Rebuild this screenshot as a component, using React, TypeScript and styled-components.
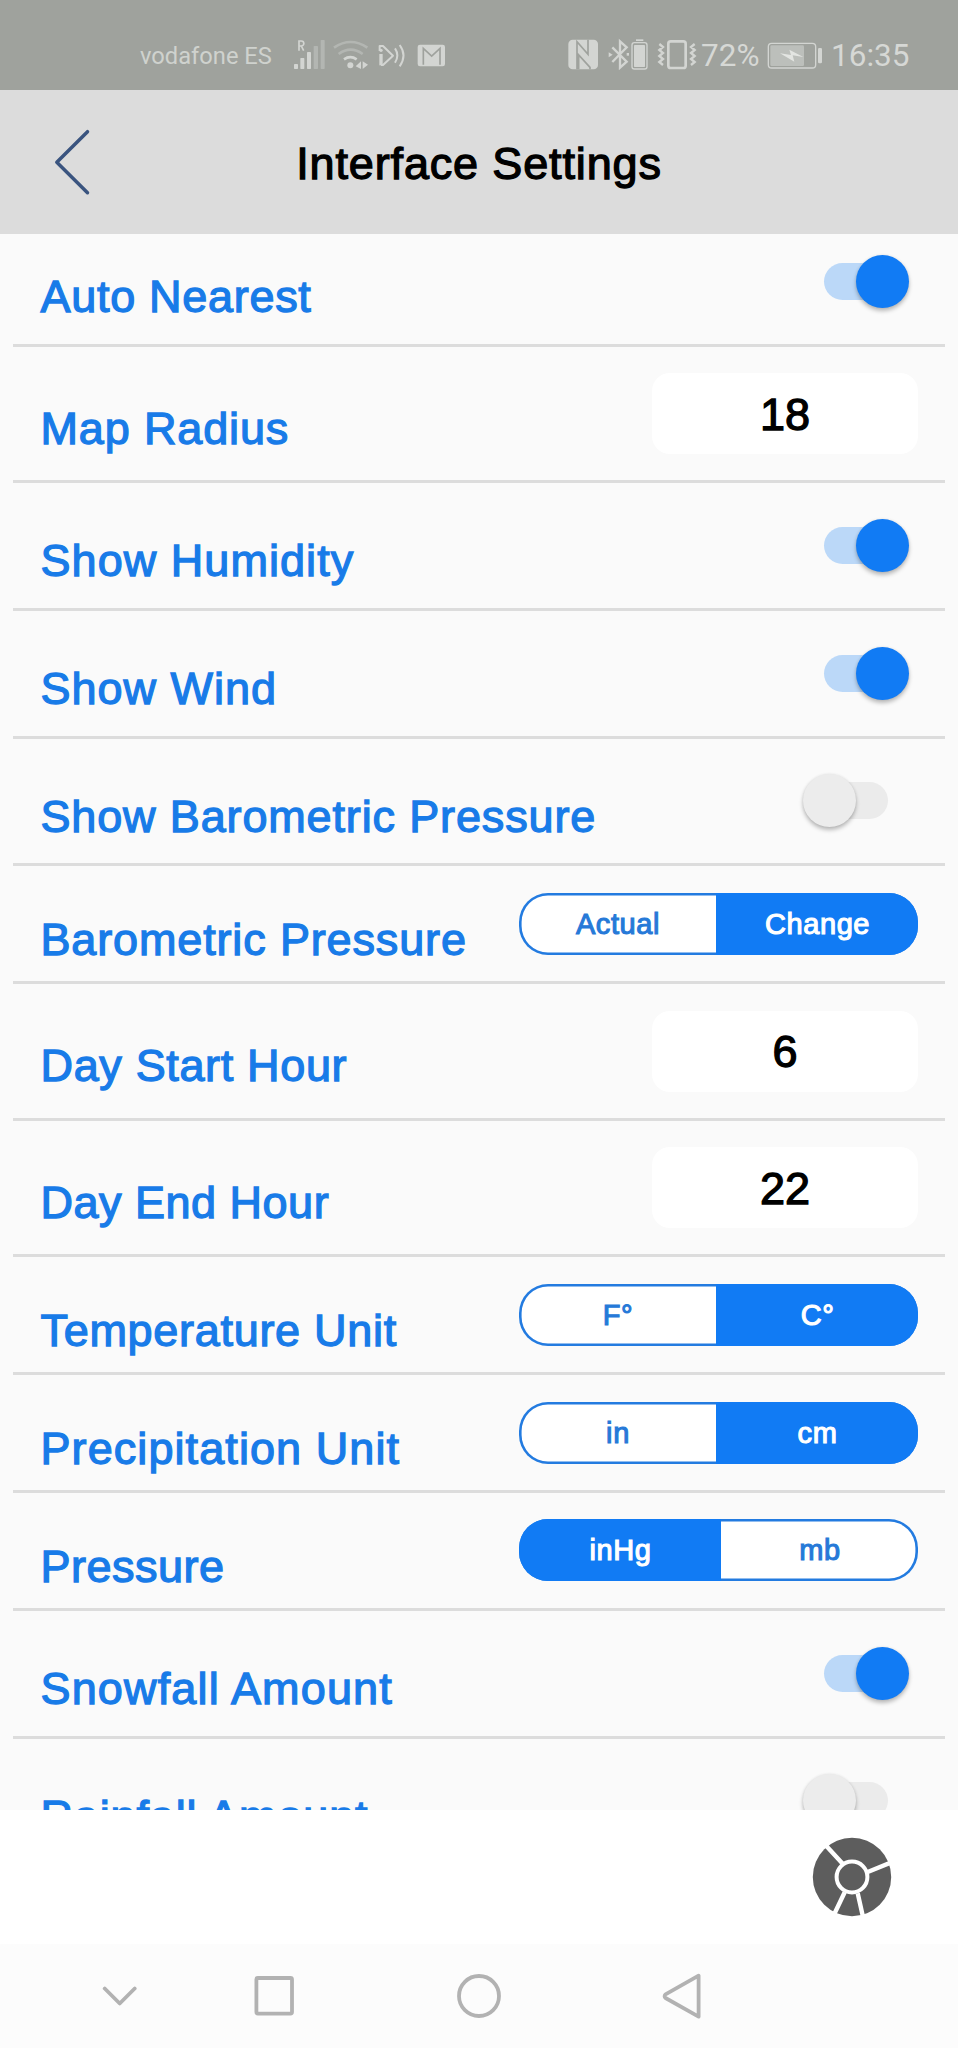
import React, { useState } from "react";
import styled, { createGlobalStyle, css } from "styled-components";

const BLUE = "#117bf4";

const GlobalStyle = createGlobalStyle`
  * { box-sizing: border-box; }
  html, body { margin: 0; padding: 0; background: #fff; }
  body { font-family: "Liberation Sans", Arial, sans-serif; overflow: hidden; }
  button { font: inherit; background: none; border: 0; padding: 0; }
`;

const Screen = styled.div`
  width: 958px;
  height: 2048px;
  display: flex;
  flex-direction: column;
  background: #fff;
`;

/* ---------- status bar ---------- */

const StatusBar = styled.div`
  height: 90px;
  flex: none;
  padding: 18px 0 0 140px;
  display: flex;
  align-items: center;
  background: #9fa29d;
  color: #d6d8d5;
  font-family: Roboto, sans-serif;
  white-space: nowrap;
`;

const Carrier = styled.span`
  width: 153px;
  font-size: 23.7px;
  line-height: 32px;
  color: #cfd2ce;
  margin-top: 3px;
`;

const StatusText = styled.span<{ $width: number }>`
  width: ${(p) => p.$width}px;
  font-size: 31.5px;
  line-height: 32px;
  margin-top: 4px;
`;

const Glyph = styled.svg<{ $gap?: number }>`
  flex: none;
  display: block;
  margin-right: ${(p) => p.$gap ?? 0}px;
`;

const SignalIcon = () => (
  <Glyph $gap={6} width="34" height="32" viewBox="489 24 102 96" fill="#d3d5d2">
    <rect x="492" y="102" width="12" height="15" rx="2" />
    <rect x="511" y="84" width="12" height="33" rx="2" />
    <rect x="531" y="66" width="12" height="51" rx="2" />
    <rect x="551" y="48" width="13" height="69" rx="2" fill="#b3b6b2" />
    <rect x="572" y="30" width="12" height="87" rx="2" fill="#b3b6b2" />
    <path d="M507 62V33h7a7 7 0 0 1 0 15h-7m7 0 7 14" fill="none" stroke="#d3d5d2" strokeWidth="5" />
  </Glyph>
);

const WifiIcon = () => (
  <Glyph $gap={9} width="36" height="32" viewBox="609 24 108 96" fill="none" strokeWidth="8">
    <path d="M612 53q50-34 100 0" stroke="#b3b6b2" />
    <path d="M626 72q36-26 72 0" stroke="#b3b6b2" />
    <path d="M642 88q19-13 38 0" stroke="#d3d5d2" />
    <circle cx="661" cy="106" r="9" fill="#d3d5d2" />
    <path d="M693 94v23l-16-8zM698 94l16 10-16 13z" fill="#d3d5d2" />
  </Glyph>
);

const CastIcon = () => (
  <Glyph $gap={10} width="29" height="32" viewBox="744 24 87 96" fill="none" stroke="#d3d5d2" strokeWidth="6">
    <path d="M749 63V48h10l30 29-30 28h-6" strokeLinejoin="round" />
    <path d="M753 72v34" strokeWidth="10" />
    <circle cx="753" cy="61" r="5" fill="#d3d5d2" stroke="none" />
    <path d="M795 55q14 21 0 43M809 45q23 31 0 64" />
  </Glyph>
);

const MailIcon = () => (
  <Glyph $gap={122} width="29" height="32" viewBox="861 24 87 96">
    <rect x="863" y="44" width="82" height="65" rx="7" fill="#d3d5d2" />
    <path d="M880 104V55l25 23 25-23v49" fill="none" stroke="#9fa29d" strokeWidth="5" />
  </Glyph>
);

const NfcIcon = () => (
  <Glyph $gap={9} width="31" height="32" viewBox="54 24 93 96">
    <rect x="55" y="29" width="89" height="89" rx="13" fill="#d3d5d2" />
    <path d="M81 118V35l33 38V29M120 118V112L86 75v43" fill="none" stroke="#9fa29d" strokeWidth="5" />
  </Glyph>
);

const BluetoothIcon = () => (
  <Glyph $gap={8} width="41" height="32" viewBox="174 24 123 96" fill="none" stroke="#d3d5d2">
    <path d="M187 52l43 43-20 18V34l20 18-43 44" strokeWidth="7" />
    <path d="M176 67l12 7-12 8z" fill="#d3d5d2" stroke="none" />
    <path d="M230 73h7" strokeWidth="8" />
    <rect x="246" y="38" width="45" height="79" rx="7" strokeWidth="4" />
    <rect x="252" y="45" width="33" height="66" rx="2" fill="#d3d5d2" stroke="none" />
    <rect x="258" y="28" width="22" height="5" fill="#d3d5d2" stroke="none" />
  </Glyph>
);

const VibrateIcon = () => (
  <Glyph $gap={4} width="40" height="32" viewBox="321 24 120 96" fill="none" stroke="#d3d5d2" strokeWidth="8">
    <rect x="355" y="34" width="52" height="80" rx="7" />
    <path
      d="M328 42l11 9-11 9 11 9-11 9 11 9-11 9 11 9M434 42l-11 9 11 9-11 9 11 9-11 9 11 9-11 9"
      strokeWidth="7"
    />
  </Glyph>
);

const BatteryIcon = () => (
  <Glyph $gap={8} width="56" height="32" viewBox="651 24 168 96">
    <rect x="655" y="40" width="142" height="74" rx="10" fill="none" stroke="#d3d5d2" strokeWidth="4" />
    <rect x="661" y="46" width="101" height="62" rx="4" fill="#bcbfbb" />
    <path d="M690 70l33 5-5-16 42 22-32-5 5 19z" fill="#e3e5e2" />
    <rect x="804" y="54" width="12" height="46" rx="4" fill="#d3d5d2" />
  </Glyph>
);

/* ---------- header ---------- */

const Header = styled.header`
  height: 144px;
  flex: none;
  display: grid;
  grid-template-columns: 120px 1fr 120px;
  align-items: center;
  background: #dcdcdc;
`;

const BackButton = styled.button`
  padding-left: 52px;
  display: flex;
`;

const Title = styled.h1`
  margin: 4px 0 0;
  text-align: center;
  font-size: 45px;
  line-height: 52px;
  font-weight: 400;
  letter-spacing: 0.85px;
  color: #000;
  -webkit-text-stroke: 1.3px #000;
  white-space: nowrap;
`;

/* ---------- settings list ---------- */

const Viewport = styled.main`
  height: 1576px;
  flex: none;
  overflow: hidden;
  background: #fafafa;
`;

const List = styled.div`
  margin: -15px 13px 0;
`;

type Kind = "toggle" | "number" | "segment";
const rowHeight: Record<Kind, number> = { toggle: 127.7, number: 136.5, segment: 117.9 };
const labelTop: Record<Kind, number> = { toggle: 53, number: 57, segment: 49 };

const Row = styled.div<{ $kind: Kind }>`
  height: ${(p) => rowHeight[p.$kind]}px;
  padding: 0 27px 0 27.5px;
  display: flex;
  justify-content: space-between;
  align-items: flex-start;
  border-bottom: 3px solid #dcdcdc;
`;

const Label = styled.span<{ $kind: Kind; $tracking: number }>`
  margin-top: ${(p) => labelTop[p.$kind]}px;
  font-size: 45px;
  line-height: 50px;
  letter-spacing: ${(p) => p.$tracking}px;
  color: #187be8;
  -webkit-text-stroke: 1.3px #187be8;
  white-space: nowrap;
`;

const Switch = styled.button<{ $on: boolean }>`
  flex: none;
  display: flex;
  align-items: center;
  width: 85px;
  height: 54px;
  margin-top: 35.3px;
  ${(p) =>
    p.$on
      ? css`
          margin-right: 9px;
          justify-content: flex-end;
        `
      : css`
          margin-right: 30px;
        `}
`;

const Track = styled.span<{ $on: boolean }>`
  width: 75px;
  height: 37px;
  border-radius: 19px;
  background: ${(p) => (p.$on ? "#bbd8f8" : "#ebebeb")};
  ${(p) => (p.$on ? "margin-right: -43px;" : "order: 2; margin-left: -43px;")}
`;

const Knob = styled.span<{ $on: boolean }>`
  flex: none;
  width: 53px;
  height: 53px;
  border-radius: 50%;
  background: ${(p) => (p.$on ? BLUE : "#ececec")};
  box-shadow: 0 3px 4px rgba(0, 0, 0, 0.26), 0 0 3px rgba(0, 0, 0, 0.08);
  z-index: 1;
`;

const NumberBox = styled.div`
  width: 266px;
  height: 81px;
  margin-top: 26.5px;
  padding-top: 2px;
  border-radius: 18px;
  background: #fff;
  display: flex;
  align-items: center;
  justify-content: center;
  font-size: 45px;
  line-height: 50px;
  color: #000;
  -webkit-text-stroke: 1.3px #000;
`;

const Segments = styled.div`
  width: 399px;
  height: 62px;
  margin-top: 26.5px;
  border-radius: 29px;
  overflow: hidden;
  background: #fff;
  display: flex;
  box-shadow: inset 0 0 0 2.6px #237be0;
`;

const Segment = styled.button<{ $active: boolean }>`
  flex: ${(p) => (p.$active ? "0 0 202px" : "1 1 0")};
  height: 62px;
  padding-left: 1px;
  font-size: 29px;
  line-height: 63px;
  letter-spacing: 0.6px;
  text-align: center;
  color: ${(p) => (p.$active ? "#fff" : "#2679d8")};
  background: ${(p) => (p.$active ? BLUE : "transparent")};
  -webkit-text-stroke: 1.1px ${(p) => (p.$active ? "#fff" : "#2679d8")};
`;

type Setting = { label: string; tracking: number } & (
  | { kind: "toggle"; value: boolean }
  | { kind: "number"; value: number }
  | { kind: "segment"; options: string[]; value: number }
);

const initialSettings: Setting[] = [
  { label: "Auto Nearest", tracking: 0.7, kind: "toggle", value: true },
  { label: "Map Radius", tracking: 0.85, kind: "number", value: 18 },
  { label: "Show Humidity", tracking: 1.05, kind: "toggle", value: true },
  { label: "Show Wind", tracking: 1, kind: "toggle", value: true },
  { label: "Show Barometric Pressure", tracking: 0.85, kind: "toggle", value: false },
  { label: "Barometric Pressure", tracking: 0.85, kind: "segment", options: ["Actual", "Change"], value: 1 },
  { label: "Day Start Hour", tracking: 0.65, kind: "number", value: 6 },
  { label: "Day End Hour", tracking: 0.5, kind: "number", value: 22 },
  { label: "Temperature Unit", tracking: 0.7, kind: "segment", options: ["F°", "C°"], value: 1 },
  { label: "Precipitation Unit", tracking: 1.08, kind: "segment", options: ["in", "cm"], value: 1 },
  { label: "Pressure", tracking: 0.5, kind: "segment", options: ["inHg", "mb"], value: 0 },
  { label: "Snowfall Amount", tracking: 1.15, kind: "toggle", value: true },
  { label: "Rainfall Amount", tracking: 0.85, kind: "toggle", value: false },
];

/* ---------- footer ---------- */

const Footer = styled.div`
  height: 134px;
  flex: none;
  display: flex;
  justify-content: flex-end;
  align-items: center;
  padding: 0 66.5px 0 0;
`;

const NavBar = styled.nav`
  height: 104px;
  flex: none;
  display: flex;
  align-items: center;
  padding-left: 102px;
  background: #fcfcfc;
`;

const NavIcon = styled.svg<{ $gap: number }>`
  flex: none;
  margin-right: ${(p) => p.$gap}px;
  fill: none;
  stroke: #b2b2b2;
  stroke-width: 3.8;
  stroke-linecap: round;
  stroke-linejoin: round;
`;

export default function App() {
  const [settings, setSettings] = useState(initialSettings);
  const update = (index: number, value: boolean | number) =>
    setSettings((all) => all.map((s, i) => (i === index ? ({ ...s, value } as Setting) : s)));

  return (
    <Screen>
      <GlobalStyle />
      <StatusBar>
        <Carrier>vodafone ES</Carrier>
        <SignalIcon />
        <WifiIcon />
        <CastIcon />
        <MailIcon />
        <NfcIcon />
        <BluetoothIcon />
        <VibrateIcon />
        <StatusText $width={66}>72%</StatusText>
        <BatteryIcon />
        <StatusText $width={80}>16:35</StatusText>
      </StatusBar>

      <Header>
        <BackButton aria-label="Back">
          <svg width="40" height="68" viewBox="52 128 40 68" fill="none">
            <path
              d="M87.5 131.7L56.8 162.2l30.7 30.5"
              stroke="#3a547f"
              strokeWidth="3.5"
              strokeLinecap="round"
              strokeLinejoin="round"
            />
          </svg>
        </BackButton>
        <Title>Interface Settings</Title>
      </Header>

      <Viewport>
        <List>
          {settings.map((s, i) => (
            <Row key={s.label} $kind={s.kind}>
              <Label $kind={s.kind} $tracking={s.tracking}>
                {s.label}
              </Label>
              {s.kind === "toggle" && (
                <Switch $on={s.value} role="switch" aria-checked={s.value} onClick={() => update(i, !s.value)}>
                  <Track $on={s.value} />
                  <Knob $on={s.value} />
                </Switch>
              )}
              {s.kind === "number" && <NumberBox>{s.value}</NumberBox>}
              {s.kind === "segment" && (
                <Segments>
                  {s.options.map((option, n) => (
                    <Segment key={option} $active={n === s.value} onClick={() => update(i, n)}>
                      {option}
                    </Segment>
                  ))}
                </Segments>
              )}
            </Row>
          ))}
        </List>
      </Viewport>

      <Footer>
        <svg width="80" height="80" viewBox="-40 -40 80 80">
          <circle r="39.2" fill="#5d5d5d" />
          <g stroke="#fff" strokeWidth="4.4">
            <path d="M-9.3-13.3L-27.5-33M15.7-5l25-10.2M-7.3 15.3l-11 23M5.7 16.3l5.6 25" />
            <circle r="15.4" fill="#5d5d5d" strokeWidth="4" />
          </g>
        </svg>
      </Footer>

      <NavBar>
        <NavIcon $gap={116} width="35" height="24" viewBox="102 1983 35 24">
          <path d="M104.7 1987.5l15 15 15-15" />
        </NavIcon>
        <NavIcon $gap={161} width="43" height="44" viewBox="253 1974 43 44">
          <rect x="256.4" y="1978" width="35.6" height="35.6" rx="1.5" />
        </NavIcon>
        <NavIcon $gap={158} width="46" height="46" viewBox="457 1973 46 46">
          <circle cx="479" cy="1996" r="20" />
        </NavIcon>
        <NavIcon $gap={0} width="42" height="48" viewBox="661 1972 42 48">
          <path d="M698.6 1975.7v41L665.5 1998q-1.8-1.8 0-3.6z" />
        </NavIcon>
      </NavBar>
    </Screen>
  );
}
